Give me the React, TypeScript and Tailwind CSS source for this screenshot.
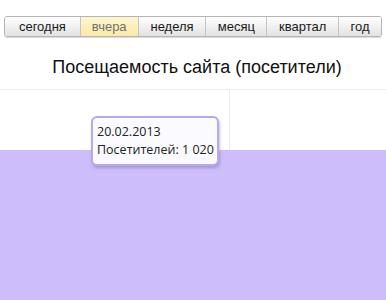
const TABS = [
  { label: 'сегодня', w: 'w-[75px]' },
  { label: 'вчера', w: 'w-[58px]', active: true },
  { label: 'неделя', w: 'w-[68px]' },
  { label: 'месяц', w: 'w-[61px]' },
  { label: 'квартал', w: 'w-[72px]' },
  { label: 'год', w: 'w-[43px]' },
];

export default function App() {
  return (
    <div className="relative h-[300px] w-[386px] overflow-hidden bg-white font-['Liberation_Sans',Arial,sans-serif]">
      <div className="pl-[4px] pt-[16px]">
        <div className="flex h-[21px] w-[378px] overflow-hidden rounded-[3px] border border-[#b4b4b4] shadow-[0_1px_1px_rgba(0,0,0,0.15)]">
          {TABS.map((t, i) => (
            <div
              key={t.label}
              className={`${t.w} flex items-center justify-center text-[13px] leading-none ${
                i > 0 ? 'border-l border-[#c4c4c4]' : ''
              } ${
                t.active
                  ? 'bg-gradient-to-b from-[#fef6cf] to-[#fbe9a6] text-[#707070]'
                  : 'bg-gradient-to-b from-[#ffffff] to-[#e2e2e2] text-[#1a1a1a]'
              }`}
            >
              {t.label}
            </div>
          ))}
        </div>
      </div>

      <div className="flex h-[53px] items-center justify-center border-b border-[#ececec] pl-[8px] pt-[9px] text-[18px] text-[#111]">
        Посещаемость сайта (посетители)
      </div>

      <div className="flex h-[60px]">
        <div className="w-[230px] border-r border-[#ececec]" />
      </div>
      <div className="h-[150px] bg-[#cdbdfb]" />

      <div className="absolute left-[91px] top-[116px] flex h-[50px] w-[128px] flex-col justify-center gap-[6px] rounded-[6px] border-2 border-[#b9a9ec] bg-[#fbfaff] pl-[4px] font-['Open_Sans',sans-serif] text-[12.5px] leading-none text-[#222] shadow-[1px_2px_3px_rgba(90,80,120,0.35)]">
        <div>20.02.2013</div>
        <div>Посетителей: 1 020</div>
      </div>
    </div>
  );
}
